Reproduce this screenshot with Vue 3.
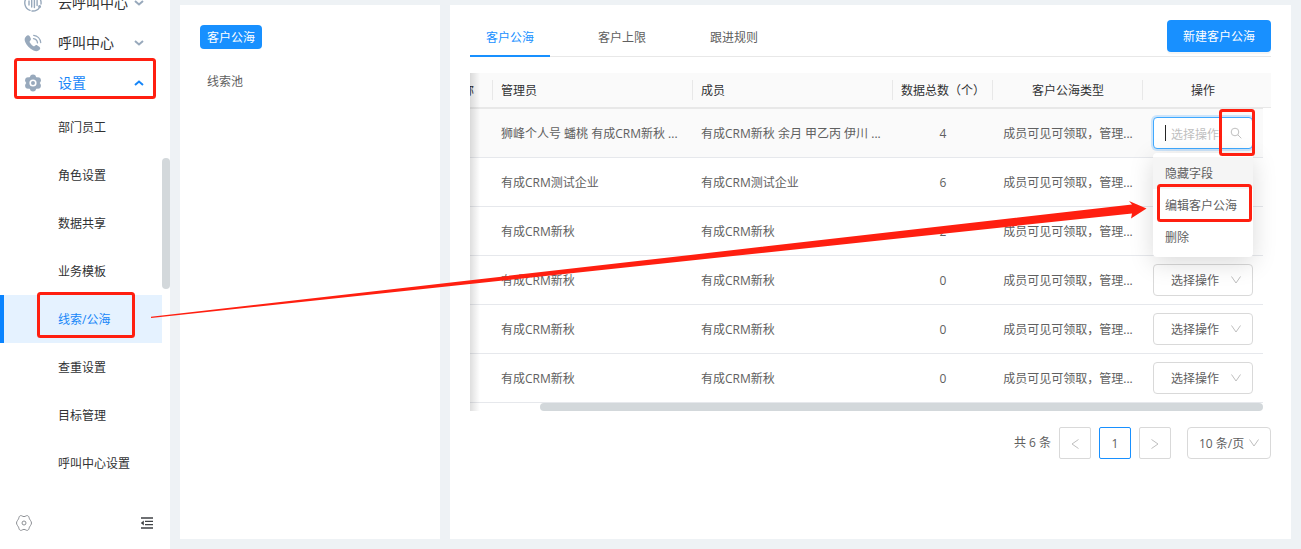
<script setup>
const groups = [
  { label: '云呼叫中心', icon: 'wave', open: false },
  { label: '呼叫中心', icon: 'phone', open: false },
  { label: '设置', icon: 'gear', open: true },
]
const subItems = ['部门员工', '角色设置', '数据共享', '业务模板', '线索/公海', '查重设置', '目标管理', '呼叫中心设置']
const activeSub = '线索/公海'
const tabs = ['客户公海', '客户上限', '跟进规则']
const poolType = '成员可见可领取，管理...'
const rows = [
  { id: 1, admin: '狮峰个人号 蟠桃 有成CRM新秋 ...', member: '有成CRM新秋 余月 甲乙丙 伊川 ...', total: 4 },
  { id: 2, admin: '有成CRM测试企业', member: '有成CRM测试企业', total: 6 },
  { id: 3, admin: '有成CRM新秋', member: '有成CRM新秋', total: 2 },
  { id: 4, admin: '有成CRM新秋', member: '有成CRM新秋', total: 0 },
  { id: 5, admin: '有成CRM新秋', member: '有成CRM新秋', total: 0 },
  { id: 6, admin: '有成CRM新秋', member: '有成CRM新秋', total: 0 },
]
const actions = ['隐藏字段', '编辑客户公海', '删除']
</script>

<template>
  <div class="layout">
    <aside class="sidebar">
      <nav class="menu">
        <button v-for="g in groups" :key="g.label" class="group" :class="{ open: g.open }" type="button">
          <svg v-if="g.icon === 'wave'" class="group-icon" viewBox="0 0 18 18" fill="none" stroke="#98a9bc" stroke-width="1.4" stroke-linecap="round">
            <path d="M3.2 3.2A8 8 0 0 0 6 16.4M8 17A8 8 0 0 0 15.4 13.6M17 10A8 8 0 0 0 14.6 3.2" />
            <path d="M5 7v4M7.7 5v8M10.4 4.5v9M13.1 6.5v5" />
            <circle cx="15.6" cy="12.6" r=".8" fill="#98a9bc" />
          </svg>
          <svg v-else-if="g.icon === 'phone'" class="group-icon" viewBox="0 0 18 18" fill="none">
            <path d="M2.2 2.2C3.4.8 5 1 5.700 2.300l1 2c.5 1 .1 1.900-.7 2.600-.6.5-.6 1 0 1.900a11 11 0 0 0 3 3.100c.8.5 1.300.4 1.900-.2.700-.7 1.600-.9 2.500-.3l1.900 1.300c1.200.8 1.200 2.100.2 3.100-1.500 1.600-3.600 1.700-6 .6C5.400 14.500 2.700 11.400 1.200 8 .2 5.600.6 3.700 2.200 2.200Z" fill="#98a9bc" />
            <path d="M9.500 4.600a4.800 4.800 0 0 1 4 4.300M9.700 1.300a8 8 0 0 1 7 7.200" stroke="#98a9bc" stroke-width="1.300" stroke-linecap="round" />
          </svg>
          <svg v-else class="group-icon" viewBox="0 0 18 18" fill="#98a9bc">
            <circle cx="9" cy="9" r="6.800" />
            <circle cx="9" cy="3.400" r="3" />
            <circle cx="13.900" cy="6.200" r="3" />
            <circle cx="13.900" cy="11.800" r="3" />
            <circle cx="9" cy="14.600" r="3" />
            <circle cx="4.100" cy="11.800" r="3" />
            <circle cx="4.100" cy="6.200" r="3" />
            <circle cx="9" cy="9" r="2.800" stroke="#fff" stroke-width="1.600" />
          </svg>
          <span class="group-label">{{ g.label }}</span>
          <svg class="group-arrow" viewBox="0 0 10 6" fill="none" stroke="currentColor" stroke-width="2">
            <path :d="g.open ? 'M1 5l4-3.500 4 3.500' : 'M1 1l4 3.500 4-3.500'" />
          </svg>
        </button>
        <a v-for="s in subItems" :key="s" href="#" class="sub" :class="{ active: s === activeSub }">{{ s }}</a>
        <span class="menu-thumb"></span>
      </nav>
      <div class="side-foot">
        <button type="button" class="icon-btn" aria-label="设置">
          <svg width="16" height="16" viewBox="0 0 16 16" fill="none" stroke="#8c8f94">
            <path d="M4.600.6C5.700.4 6.500 1.600 8 1.600S10.300.4 11.400.6c1.400.5 1.500 1.300 1.800 2.600.3 1.300 2.300 3 2.300 4.800s-2 3.500-2.300 4.800c-.3 1.300-.4 2.100-1.800 2.600-1.100.2-1.900-1-3.400-1s-2.300 1.200-3.400 1c-1.400-.5-1.500-1.300-1.800-2.600C2.500 11.500.5 9.800.5 8s2-3.500 2.300-4.800C3.100 1.900 3.200 1.100 4.600.6Z" />
            <circle cx="8" cy="8" r="2" />
          </svg>
        </button>
        <button type="button" class="icon-btn" aria-label="收起">
          <svg width="14" height="12" viewBox="0 0 14 12" fill="none" stroke="#3f4246" stroke-width="1.300">
            <path d="M1 1h12M5 4.400h8M5 7.600h8M1 11h12" />
            <path d="M3.800 3.500v5L.8 6Z" fill="#3f4246" stroke="none" />
          </svg>
        </button>
      </div>
    </aside>

    <section class="panel pools">
      <button type="button" class="pool current">客户公海</button>
      <button type="button" class="pool">线索池</button>
    </section>

    <main class="panel content">
      <header class="tab-bar">
        <div class="tabs" role="tablist">
          <button v-for="(t, i) in tabs" :key="t" type="button" role="tab" class="tab" :class="{ active: i === 0 }">{{ t }}</button>
        </div>
        <button type="button" class="primary">新建客户公海</button>
      </header>

      <div class="table-box">
        <table>
          <colgroup>
            <col class="c-name" /><col class="c-wide" /><col class="c-wide" /><col class="c-total" /><col class="c-type" /><col class="c-op" /><col class="c-gutter" />
          </colgroup>
          <thead>
            <tr>
              <th class="name"><div class="cut">称</div></th>
              <th class="left">管理员</th>
              <th class="left">成员</th>
              <th>数据总数（个）</th>
              <th>客户公海类型</th>
              <th class="last">操作</th>
              <th class="last"></th>
            </tr>
          </thead>
          <tbody>
            <tr v-for="(r, i) in rows" :key="r.id" :class="{ hover: i === 0 }">
              <td></td>
              <td class="left">{{ r.admin }}</td>
              <td class="left">{{ r.member }}</td>
              <td>{{ r.total }}</td>
              <td>{{ poolType }}</td>
              <td class="op">
                <div v-if="i === 0" class="picker focused">
                  <input type="text" placeholder="选择操作" aria-label="选择操作" />
                  <span class="caret"></span>
                  <svg class="mark" viewBox="0 0 12 12" fill="none" stroke="#bfbfbf">
                    <circle cx="5" cy="5" r="3.800" /><path d="M7.800 7.800 11.300 11.300" />
                  </svg>
                  <ul class="drop">
                    <li v-for="(a, k) in actions" :key="a"><button type="button" :class="{ lit: k === 0 }">{{ a }}</button></li>
                  </ul>
                </div>
                <div v-else class="picker">
                  <select aria-label="选择操作"><option>选择操作</option></select>
                  <svg class="mark" viewBox="0 0 12 12" fill="none" stroke="#bfbfbf"><path d="M1.500 2.500 6 9 10.500 2.500" /></svg>
                </div>
              </td>
            </tr>
          </tbody>
        </table>
        <div class="h-thumb"></div>
      </div>

      <footer class="pager">
        <span class="sum">共 6 条</span>
        <button type="button" class="page" aria-label="上一页">
          <svg width="12" height="12" viewBox="0 0 12 12" fill="none" stroke="#bfbfbf"><path d="M9.500 1.500 3 6l6.500 4.500" /></svg>
        </button>
        <button type="button" class="page now">1</button>
        <button type="button" class="page" aria-label="下一页">
          <svg width="12" height="12" viewBox="0 0 12 12" fill="none" stroke="#bfbfbf"><path d="M2.500 1.500 9 6l-6.500 4.500" /></svg>
        </button>
        <div class="picker size">
          <select aria-label="每页条数"><option>10 条/页</option></select>
          <svg class="mark" viewBox="0 0 12 12" fill="none" stroke="#bfbfbf"><path d="M1.500 2.500 6 9 10.500 2.500" /></svg>
        </div>
      </footer>
    </main>

    <svg class="marks" width="1301" height="549" viewBox="0 0 1301 549" fill="none" stroke="#ff1f10" stroke-width="3">
      <rect x="15.500" y="59.500" width="139" height="38" rx="2" />
      <rect x="38.500" y="293.500" width="95" height="43" rx="2" />
      <rect x="1220.500" y="110.500" width="33" height="44" rx="2" />
      <rect x="1158.500" y="185.500" width="92" height="35" rx="2" />
      <path d="M151 316.700 1132 204.500 1129 201 1146.500 208.500 1131 218.500 1132 213.500 151 318Z" fill="#ff1f10" stroke="none" />
    </svg>
  </div>
</template>

<style>
body {
  margin: 0;
}
</style>

<style scoped>
.layout {
  position: relative;
  display: flex;
  gap: 10px;
  height: 100vh;
  padding-right: 10px;
  box-sizing: border-box;
  overflow: hidden;
  background: #eef2f5;
  color: #606060;
  font: 12px/20px "Open Sans", "Noto Sans CJK SC", sans-serif;
}
.layout *,
.layout *::before,
.layout *::after {
  box-sizing: border-box;
}
button,
input,
select {
  margin: 0;
  padding: 0;
  border: 0;
  background: none;
  color: inherit;
  font: inherit;
}
.sidebar {
  display: flex;
  flex: none;
  flex-direction: column;
  width: 170px;
  background: #fff;
}
.menu {
  position: relative;
  display: flex;
  flex: 1;
  flex-direction: column;
  justify-content: flex-end;
  min-height: 0;
  padding: 0 8px 10px 0;
  overflow: hidden;
}
.group {
  display: flex;
  flex: none;
  align-items: center;
  height: 40px;
  padding: 0 18px 0 24px;
  color: #303133;
  font-size: 14px;
  text-align: left;
}
.group-icon {
  width: 18px;
  height: 18px;
  margin-right: 16px;
}
.group-label {
  flex: 1;
}
.group-arrow {
  width: 10px;
  height: 6px;
  color: #98a9bc;
}
.group.open,
.group.open .group-arrow {
  color: #1686f8;
}
.sub {
  flex: none;
  height: 48px;
  padding-left: 58px;
  color: #303133;
  line-height: 50px;
  text-decoration: none;
}
.sub.active {
  padding-left: 54px;
  border-left: 4px solid #0a84ff;
  background: #e5f2ff;
  color: #1686f8;
}
.menu-thumb {
  position: absolute;
  top: 158px;
  right: 0;
  width: 8px;
  height: 131px;
  border-radius: 4px;
  background: #d3d8db;
}
.side-foot {
  display: flex;
  flex: none;
  align-items: center;
  justify-content: space-between;
  height: 52px;
  padding: 0 16px;
}
.icon-btn {
  display: flex;
}
.panel {
  margin: 5px 0 10px;
  background: #fff;
}
.pools {
  display: flex;
  flex: none;
  flex-direction: column;
  align-items: flex-start;
  gap: 20px;
  width: 260px;
  padding: 20px;
}
.pool {
  height: 24px;
  padding: 2px 7px 0;
  border-radius: 4px;
}
.pool.current {
  background: #1890ff;
  color: #fff;
}
.content {
  flex: 1;
  min-width: 0;
  padding: 12px 20px;
}
.tab-bar {
  display: flex;
  align-items: flex-start;
  justify-content: space-between;
  height: 40px;
  box-shadow: inset 0 -1px #e8e8e8;
}
.tabs {
  display: flex;
  gap: 32px;
}
.tab {
  height: 40px;
  padding: 2px 16px 0;
}
.tab.active {
  box-shadow: inset 0 -2px #1890ff;
  color: #1890ff;
}
.primary {
  height: 32px;
  margin-top: 3px;
  padding: 2px 16px 0;
  border-radius: 4px;
  background: #1890ff;
  box-shadow: 0 2px 0 rgba(0, 0, 0, 0.04);
  color: #fff;
}
.table-box {
  position: relative;
  margin-top: 16px;
}
.table-box::before {
  content: "";
  position: absolute;
  z-index: 1;
  inset: 0 auto 0 0;
  width: 10px;
  background: linear-gradient(90deg, rgba(0, 0, 0, 0.13), rgba(0, 0, 0, 0));
}
table {
  width: 100%;
  border-spacing: 0;
  table-layout: fixed;
}
.c-name {
  width: 23px;
}
.c-wide {
  width: 200px;
}
.c-total {
  width: 100px;
}
.c-type {
  width: 150px;
}
.c-op {
  width: 120px;
}
.c-gutter {
  width: 8px;
}
th {
  position: relative;
  height: 35px;
  padding: 2px 0 0;
  border-bottom: 1px solid #e8e8e8;
  background: #fafafa;
  color: #303133;
  font-weight: 400;
  white-space: nowrap;
}
th::after {
  content: "";
  position: absolute;
  top: 7px;
  right: 0;
  width: 1px;
  height: 20px;
  background: #e8e8e8;
}
th.last::after {
  display: none;
}
.cut {
  display: flex;
  justify-content: flex-end;
  width: 4px;
  overflow: hidden;
}
td {
  height: 49px;
  padding: 2px 0 0;
  border-bottom: 1px solid #e6e8ec;
  text-align: center;
  white-space: nowrap;
}
.hover td {
  height: 50px;
  border-top: 1px solid #e8e8e8;
  background: #fafafa;
}
.left {
  padding-left: 8px;
  text-align: left;
}
.op {
  padding: 0 10px;
}
.picker {
  position: relative;
  height: 32px;
}
.picker select,
.picker input {
  display: block;
  width: 100%;
  height: 32px;
  padding: 2px 17px 0;
  border: 1px solid #d9d9d9;
  border-radius: 4px;
  outline: 0;
  background: #fff;
  appearance: none;
}
.picker.focused input {
  border-color: #40a9ff;
  box-shadow: 0 0 0 2px rgba(24, 144, 255, 0.2);
}
.picker input::placeholder {
  color: #bfbfbf;
}
.caret {
  position: absolute;
  top: 8px;
  left: 12px;
  width: 1px;
  height: 16px;
  background: #262626;
}
.mark {
  position: absolute;
  top: 10px;
  right: 11px;
  width: 12px;
  height: 12px;
  pointer-events: none;
}
.drop {
  position: absolute;
  z-index: 1;
  top: 36px;
  left: 0;
  width: 100%;
  margin: 0;
  padding: 4px 0;
  border-radius: 4px;
  background: #fff;
  box-shadow: 0 6px 24px rgba(0, 0, 0, 0.15);
  list-style: none;
}
.drop button {
  display: block;
  width: 100%;
  height: 32px;
  padding: 2px 12px 0;
  text-align: left;
}
.drop .lit {
  background: #f5f5f5;
}
.h-thumb {
  height: 8px;
  margin: 0 8px 0 70px;
  border-radius: 4px;
  background: #d3d8db;
}
.pager {
  display: flex;
  align-items: center;
  justify-content: flex-end;
  gap: 8px;
  margin-top: 16px;
}
.page {
  display: flex;
  align-items: center;
  justify-content: center;
  width: 32px;
  height: 32px;
  padding-top: 2px;
  border: 1px solid #d9d9d9;
  border-radius: 2px;
}
.page.now {
  border-color: #1890ff;
}
.size {
  width: 84px;
  margin-left: 8px;
}
.size select {
  padding: 2px 11px 0;
}
.marks {
  position: absolute;
  z-index: 2;
  top: 0;
  left: 0;
  pointer-events: none;
}
</style>
